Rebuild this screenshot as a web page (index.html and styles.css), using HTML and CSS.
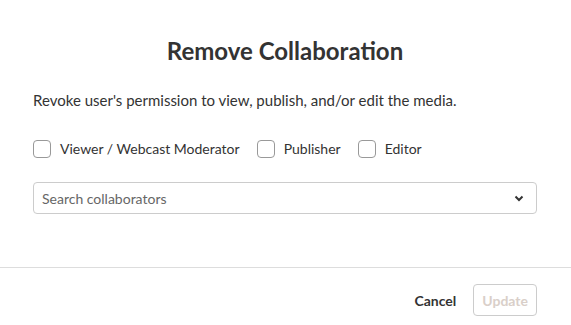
FILE: index.html
```html
<!DOCTYPE html>
<html lang="en">
<head>
    <meta charset="UTF-8">
    <meta name="viewport" content="width=device-width, initial-scale=1.0">
    <title>Remove Collaboration</title>
    <link rel="stylesheet" href="styles.css">
</head>
<body>
    <div class="modal">
        <div class="modal-body">
            <h1>Remove Collaboration</h1>
            <p class="desc">Revoke user's permission to view, publish, and/or edit the media.</p>
            <div class="roles">
                <label class="role"><span class="box"></span>Viewer / Webcast Moderator</label>
                <label class="role"><span class="box"></span>Publisher</label>
                <label class="role"><span class="box"></span>Editor</label>
            </div>
            <div class="select">
                <span class="placeholder">Search collaborators</span>
                <svg class="caret" width="10" height="7" viewBox="0 0 10 7">
                    <path d="M1.5 1.5 L5 5 L8.5 1.5" fill="none" stroke="#333" stroke-width="2"/>
                </svg>
            </div>
        </div>
        <div class="modal-footer">
            <button class="btn-cancel">Cancel</button>
            <button class="btn-update" disabled>Update</button>
        </div>
    </div>
</body>
</html>
```

FILE: styles.css
```css
body {
    margin: 0;
    font-family: 'Lato', 'Liberation Sans', sans-serif;
    background: #fff;
    color: #333;
}
.modal {
    width: 571px;
}
.modal-body {
    padding: 36px 34px 53px 33px;
}
h1 {
    margin: 0 0 24px;
    text-align: center;
    font-size: 24px;
    font-weight: 700;
    color: #333;
    line-height: 30px;
}
.desc {
    margin: 0 0 29px;
    font-size: 15px;
    line-height: 20px;
    color: #333;
}
.roles {
    display: flex;
    align-items: center;
    gap: 17px;
    margin-bottom: 23px;
}
.role {
    display: flex;
    align-items: center;
    font-size: 14px;
    line-height: 20px;
    color: #333;
}
.box {
    width: 16px;
    height: 16px;
    border: 1px solid #999;
    border-radius: 4px;
    margin-right: 9px;
}
.select {
    display: flex;
    align-items: center;
    justify-content: space-between;
    height: 30px;
    border: 1px solid #ccc;
    border-radius: 4px;
    padding: 0 12px 0 8px;
}
.placeholder {
    font-size: 14px;
    color: #666;
}
.modal-footer {
    border-top: 1px solid #ddd;
    display: flex;
    justify-content: flex-end;
    align-items: center;
    gap: 17px;
    padding: 16px 34px 9px 0;
}
button {
    font-family: 'Lato', 'Liberation Sans', sans-serif;
    font-size: 14px;
    font-weight: 700;
    background: none;
    cursor: pointer;
}
.btn-cancel {
    border: none;
    color: #333;
    padding: 0;
}
.btn-update {
    height: 32px;
    padding: 0 8px;
    border: 1px solid #ccc;
    border-radius: 4px;
    color: #d9cfc9;
    cursor: default;
}
```
